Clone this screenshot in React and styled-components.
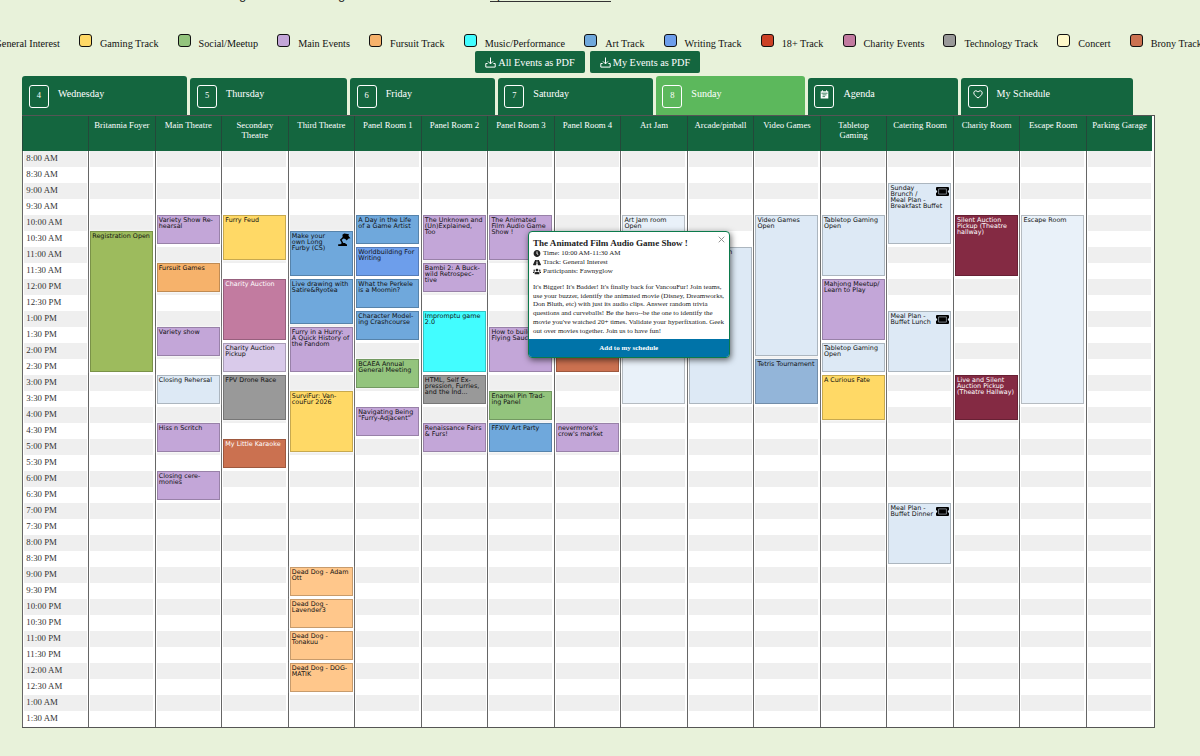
import React from "react";
import styled, {createGlobalStyle, css} from "styled-components";
import {FaClock, FaRoad, FaUsers} from "react-icons/fa";

const tracks = [
    {name: "General Interest", color: "#c3a6d8"},
    {name: "Gaming Track", color: "#ffd966"},
    {name: "Social/Meetup", color: "#93c47d"},
    {name: "Main Events", color: "#c3a6d8"},
    {name: "Fursuit Track", color: "#f6b26b"},
    {name: "Music/Performance", color: "#42fdff"},
    {name: "Art Track", color: "#6fa8dc"},
    {name: "Writing Track", color: "#6d9eeb"},
    {name: "18+ Track", color: "#cc4125"},
    {name: "Charity Events", color: "#c27ba0"},
    {name: "Technology Track", color: "#999999"},
    {name: "Concert", color: "#fff9c9"},
    {name: "Brony Track", color: "#cb7150"},
];

const colors = {
    green: "#9dbb5d",
    social: "#93c47d",
    main: "#c3a6d8",
    lilac: "#d9caea",
    fursuit: "#f6b26b",
    dance: "#ffc78b",
    gaming: "#ffd966",
    charity: "#c27ba0",
    tech: "#999999",
    brony: "#cb7150",
    art: "#6fa8dc",
    writing: "#6d9eeb",
    music: "#42fdff",
    tetris: "#93b5d9",
    open: "#dde9f5",
    pale: "#e9f1f9",
    wine: "#842a43",
};

const days = [
    {label: "Wednesday", icon: "4", width: 165, tall: true},
    {label: "Thursday", icon: "5", width: 156.5},
    {label: "Friday", icon: "6", width: 144.5},
    {label: "Saturday", icon: "7", width: 155},
    {label: "Sunday", icon: "8", width: 149, tall: true, active: true},
    {label: "Agenda", icon: "calendar", width: 150},
    {label: "My Schedule", icon: "heart", width: 172},
];

// start is the half hour slot counted from 8:00 AM, span the number of slots
const rooms = [
    {name: "Britannia Foyer", events: [
        {title: "Registration Open", start: 5, span: 9, color: "green"},
    ]},
    {name: "Main Theatre", events: [
        {title: "Variety Show Re-\nhearsal", start: 4, span: 2, color: "main"},
        {title: "Fursuit Games", start: 7, span: 2, color: "fursuit"},
        {title: "Variety show", start: 11, span: 2, color: "main"},
        {title: "Closing Rehersal", start: 14, span: 2, color: "open"},
        {title: "Hiss n Scritch", start: 17, span: 2, color: "main"},
        {title: "Closing cere-\nmonies", start: 20, span: 2, color: "main"},
    ]},
    {name: "Secondary\nTheatre", events: [
        {title: "Furry Feud", start: 4, span: 3, color: "gaming"},
        {title: "Charity Auction", start: 8, span: 4, color: "charity", light: true},
        {title: "Charity Auction\nPickup", start: 12, span: 2, color: "lilac"},
        {title: "FPV Drone Race", start: 14, span: 3, color: "tech"},
        {title: "My Little Karaoke", start: 18, span: 2, color: "brony", light: true},
    ]},
    {name: "Third Theatre", events: [
        {title: "Make your\nown Long\nFurby (CS)", start: 5, span: 3, color: "art", icon: "lamp"},
        {title: "Live drawing with\nSatire&Ryotea", start: 8, span: 3, color: "art"},
        {title: "Furry in a Hurry:\nA Quick History of\nthe Fandom", start: 11, span: 3, color: "main"},
        {title: "SurviFur: Van-\ncouFur 2026", start: 15, span: 4, color: "gaming"},
        {title: "Dead Dog - Adam\nOtt", start: 26, span: 2, color: "dance"},
        {title: "Dead Dog -\nLavender3", start: 28, span: 2, color: "dance"},
        {title: "Dead Dog -\nTonakuu", start: 30, span: 2, color: "dance"},
        {title: "Dead Dog - DOG-\nMATIK", start: 32, span: 2, color: "dance"},
    ]},
    {name: "Panel Room 1", events: [
        {title: "A Day in the Life\nof a Game Artist", start: 4, span: 2, color: "art"},
        {title: "Worldbuilding For\nWriting", start: 6, span: 2, color: "writing"},
        {title: "What the Perkele\nis a Moomin?", start: 8, span: 2, color: "art"},
        {title: "Character Model-\ning Crashcourse", start: 10, span: 2, color: "art"},
        {title: "BCAEA Annual\nGeneral Meeting", start: 13, span: 2, color: "social"},
        {title: "Navigating Being\n\"Furry-Adjacent\"", start: 16, span: 2, color: "main"},
    ]},
    {name: "Panel Room 2", events: [
        {title: "The Unknown and\n(Un)Explained,\nToo", start: 4, span: 3, color: "main"},
        {title: "Bambi 2: A Buck-\nwild Retrospec-\ntive", start: 7, span: 2, color: "main"},
        {title: "Impromptu game\n2.0", start: 10, span: 4, color: "music"},
        {title: "HTML, Self Ex-\npression, Furries,\nand the Ind...", start: 14, span: 2, color: "tech"},
        {title: "Renaissance Fairs\n& Furs!", start: 17, span: 2, color: "main"},
    ]},
    {name: "Panel Room 3", events: [
        {title: "The Animated\nFilm Audio Game\nShow !", start: 4, span: 3, color: "main"},
        {title: "How to build\nFlying Saucer", start: 11, span: 3, color: "main"},
        {title: "Enamel Pin Trad-\ning Panel", start: 15, span: 2, color: "social"},
        {title: "FFXIV Art Party", start: 17, span: 2, color: "art"},
    ]},
    {name: "Panel Room 4", events: [
        {title: "", start: 12, span: 2, color: "brony", light: true},
        {title: "nevermore's\ncrow's market", start: 17, span: 2, color: "main"},
    ]},
    {name: "Art Jam", events: [
        {title: "Art Jam room\nOpen", start: 4, span: 12, color: "pale"},
    ]},
    {name: "Arcade/pinball", events: [
        {title: "Arcade Open", start: 6, span: 10, color: "open"},
    ]},
    {name: "Video Games", events: [
        {title: "Video Games\nOpen", start: 4, span: 9, color: "open"},
        {title: "Tetris Tournament", start: 13, span: 3, color: "tetris"},
    ]},
    {name: "Tabletop\nGaming", events: [
        {title: "Tabletop Gaming\nOpen", start: 4, span: 4, color: "open"},
        {title: "Mahjong Meetup/\nLearn to Play", start: 8, span: 4, color: "main"},
        {title: "Tabletop Gaming\nOpen", start: 12, span: 2, color: "open"},
        {title: "A Curious Fate", start: 14, span: 3, color: "gaming"},
    ]},
    {name: "Catering Room", events: [
        {title: "Sunday\nBrunch /\nMeal Plan -\nBreakfast Buffet", start: 2, span: 4, color: "open", icon: "ticket"},
        {title: "Meal Plan -\nBuffet Lunch", start: 10, span: 4, color: "open", icon: "ticket"},
        {title: "Meal Plan -\nBuffet Dinner", start: 22, span: 4, color: "open", icon: "ticket"},
    ]},
    {name: "Charity Room", events: [
        {title: "Silent Auction\nPickup (Theatre\nhallway)", start: 4, span: 4, color: "wine", light: true},
        {title: "Live and Silent\nAuction Pickup\n(Theatre Hallway)", start: 14, span: 3, color: "wine", light: true},
    ]},
    {name: "Escape Room", events: [
        {title: "Escape Room", start: 4, span: 12, color: "pale"},
    ]},
    {name: "Parking Garage", events: []},
];

const times = Array.from({length: 36}, (_, i) => {
    const hour = (8 + Math.floor(i / 2)) % 24;
    return `${hour % 12 || 12}:${i % 2 ? "30" : "00"} ${hour < 12 ? "AM" : "PM"}`;
});

const DownloadIcon = () => (
    <svg width="11" height="11" viewBox="0 0 11 11" fill="none" stroke="#fff" strokeWidth="1">
        <path d="M5.5 .5v6.3M3 4.4l2.5 2.5L8 4.4M2.6 6.5H.8v3.6h9.4V6.5H8.4" />
    </svg>
);

const CalendarIcon = () => (
    <svg width="9" height="9" viewBox="0 0 9 9">
        <path fill="#fff" d="M.7 1.2h1.2V.2h1v1h3.2v-1h1v1h1.2v7.4H.7z" />
        <path stroke="#14663f" strokeWidth=".8" d="M1.4 3.2h6.2M2.5 4.9h4M2.5 6.6h2.6" />
    </svg>
);

const HeartIcon = () => (
    <svg width="10" height="9" viewBox="0 0 10 9" fill="none" stroke="#fff" strokeWidth="1">
        <path d="M5 8C3 6.4.8 4.9.8 2.9.8 1.7 1.7.8 2.8.8 3.8.8 4.5 1.3 5 2.1 5.5 1.3 6.2.8 7.2.8c1.1 0 2 .9 2 2.1C9.2 4.9 7 6.4 5 8z" />
    </svg>
);

const TicketIcon = () => (
    <svg width="13" height="9" viewBox="0 0 13 9">
        <path d="M1 0h11a1 1 0 0 1 1 1v2.3a1.2 1.2 0 0 0 0 2.4V8a1 1 0 0 1-1 1H1a1 1 0 0 1-1-1V5.7a1.2 1.2 0 0 0 0-2.4V1a1 1 0 0 1 1-1z" />
        <path fill="none" stroke="#a9b2bb" strokeWidth=".7" d="M2.6 1.9h7.8v5.2H2.6z" />
    </svg>
);

const LampIcon = () => (
    <svg width="14" height="14" viewBox="0 0 14 14">
        <path d="M5.4 1.8 7.2.6 12 1.2 11.4 2.8 13.4 5.2 11.6 5.4 9.6 7.6 8.6 6.2 5.8 5z" />
        <path fill="none" stroke="#000" strokeWidth="1.4" d="M6.6 4.4 3.8 6.8 6.4 11.6" />
        <path d="M1.2 11.2h2.2L5 10h3l1.2 1.2h.8V13H1.2z" />
    </svg>
);

const tabIcons = {calendar: <CalendarIcon />, heart: <HeartIcon />};
const eventIcons = {ticket: <TicketIcon />, lamp: <LampIcon />};

const EventPopup = () => (
    <Popup>
        <Close>
            <svg width="7" height="7" viewBox="0 0 7 7" stroke="#888" strokeWidth=".9">
                <path d="M.7.7l5.6 5.6M6.3.7L.7 6.3" />
            </svg>
        </Close>
        <PopupBody>
            <PopupTitle>The Animated Film Audio Game Show !</PopupTitle>
            <Meta><FaClock />Time: 10:00 AM-11:30 AM</Meta>
            <Meta><FaRoad />Track: General Interest</Meta>
            <Meta><FaUsers />Participants: Fawnyglow</Meta>
            <Description>
                {"It's Bigger! It's Badder! It's finally back for VancouFur! Join teams,\nuse your buzzer, identify the animated movie (Disney, Dreamworks,\nDon Bluth, etc) with just its audio clips. Answer random trivia\nquestions and curveballs! Be the hero--be the one to identify the\nmovie you've watched 20+ times. Validate your hyperfixation. Geek\nout over movies together. Join us to have fun!"}
            </Description>
        </PopupBody>
        <AddButton>Add to my schedule</AddButton>
    </Popup>
);

export default function App() {
    return (
        <Page>
            <GlobalStyle />
            <Intro>
                <span>g</span>
                <span>g</span>
                <IntroLink><b>p</b></IntroLink>
            </Intro>
            <Legend>
                {tracks.map((track) => (
                    <LegendItem key={track.name}>
                        <Swatch $color={track.color} />
                        <span>{track.name}</span>
                    </LegendItem>
                ))}
            </Legend>
            <Exports>
                <ExportButton><DownloadIcon />All Events as PDF</ExportButton>
                <ExportButton><DownloadIcon />My Events as PDF</ExportButton>
            </Exports>
            <Tabs>
                {days.map((day) => (
                    <Tab key={day.label} $width={day.width} $tall={day.tall} $active={day.active}>
                        <TabIcon>{tabIcons[day.icon] || day.icon}</TabIcon>
                        <TabLabel>{day.label}</TabLabel>
                    </Tab>
                ))}
            </Tabs>
            <Schedule>
                <Column>
                    <RoomName />
                    <Slots>
                        {times.map((time) => <Time key={time}>{time}</Time>)}
                    </Slots>
                </Column>
                {rooms.map((room) => (
                    <Column key={room.name}>
                        <RoomName>{room.name}</RoomName>
                        <Slots>
                            {room.events.map((event) => (
                                <Event
                                    key={event.start}
                                    $start={event.start + 1}
                                    $span={event.span}
                                    $color={colors[event.color]}
                                    $light={event.light}
                                >
                                    {event.title}
                                    {event.icon && <EventIcon $kind={event.icon}>{eventIcons[event.icon]}</EventIcon>}
                                </Event>
                            ))}
                        </Slots>
                    </Column>
                ))}
            </Schedule>
            <EventPopup />
        </Page>
    );
}

const GlobalStyle = createGlobalStyle`
  * {
    box-sizing: border-box;
  }
  body {
    margin: 0;
    background: #e8f2da;
    font-family: "Liberation Serif", serif;
    overflow: hidden;
  }
`

const Page = styled.div`
  position: relative;
  width: 1200px;
  height: 756px;
  overflow: hidden;
  background: #e8f2da;
  color: #222;
`

const Intro = styled.div`
  display: flex;
  height: 4px;
  padding-left: 239px;
  font: 13px/14px "Liberation Sans", sans-serif;
  overflow: hidden;

  span {
    flex: none;
    width: 99px;
    margin-top: -12px;
  }
`

const IntroLink = styled.div`
  width: 121px;
  height: 13px;
  margin: -11px 0 0 53px;
  padding-left: 7px;
  border-bottom: 1px solid #333;

  b {
    display: block;
    margin-top: -1px;
    font-weight: normal;
  }
`

const Legend = styled.div`
  display: flex;
  height: 47px;
  padding-top: 30px;
  margin-left: -26.5px;
  color: #111;
  font-size: 10.2px;
  white-space: nowrap;
`

const LegendItem = styled.div`
  display: flex;
  flex: none;
  gap: 8px;
  margin-right: 19.1px;
  line-height: 19px;
`

const Swatch = styled.i`
  width: 13px;
  height: 13px;
  border: 1.5px solid #111;
  border-radius: 3px;
  background: ${({$color}) => $color};
`

const Exports = styled.div`
  display: flex;
  justify-content: center;
  gap: 5px;
  height: 24.5px;
  padding-right: 25px;
`

const ExportButton = styled.button`
  display: flex;
  align-items: center;
  justify-content: center;
  gap: 2px;
  width: 110px;
  height: 22px;
  padding: 0;
  border: 0;
  border-radius: 2px;
  background: #14663f;
  color: #fff;
  font: 10.3px "Liberation Serif", serif;
  white-space: nowrap;
`

const Tabs = styled.div`
  display: flex;
  align-items: flex-end;
  gap: 3.1px;
  height: 39.5px;
  padding-left: 22.4px;
`

const Tab = styled.div`
  display: flex;
  flex: none;
  gap: 9px;
  width: ${({$width}) => $width}px;
  height: ${({$tall}) => $tall ? "39.5px" : "37px"};
  padding: ${({$tall}) => $tall ? "9.5px" : "7px"} 0 0 6.6px;
  border-radius: 3px 3px 0 0;
  background: ${({$active}) => $active ? "#5cb85c" : "#14663f"};
  color: #fff;
`

const TabIcon = styled.div`
  display: flex;
  justify-content: center;
  align-items: center;
  width: 20px;
  height: 23px;
  padding-bottom: 4px;
  border: 1px solid #fff;
  border-radius: 3px;
  font-size: 8.5px;
`

const TabLabel = styled.div`
  font-size: 10.1px;
  line-height: 17px;
`

const Schedule = styled.div`
  display: flex;
  width: 1133px;
  height: 613px;
  margin-left: 22px;
  border: solid #555;
  border-width: 1px 1px 1px 0;
  background: #fff;
`

const Column = styled.div`
  flex: none;
  width: 66.53px;
  border-left: 1px solid #666;

  &:first-child {
    width: 66.1px;
  }
`

const RoomName = styled.div`
  height: 35px;
  padding-top: 5px;
  margin-left: -1px;
  border-left: 1px solid #24483a;
  background: #14663f;
  color: #fff;
  font-size: 8.75px;
  line-height: 9.7px;
  text-align: center;
  white-space: pre;
`

const Slots = styled.div`
  display: grid;
  grid-template-rows: repeat(36, 16px);
  padding: 0 1.5px 0 1px;
  background: repeating-linear-gradient(#efefef 0 16px, #fff 16px 32px) content-box;
`

const Time = styled.div`
  padding-left: 2.3px;
  color: #333;
  font-size: 8.8px;
  line-height: 15px;
`

const Event = styled.div`
  position: relative;
  grid-row: ${({$start, $span}) => `${$start} / span ${$span}`};
  margin: 0 0 3px;
  padding: 2.2px 0 0 1.2px;
  border: 1px solid rgba(0, 0, 0, .22);
  box-shadow: 0 0 1px 1px rgba(255, 255, 255, .45);
  background: ${({$color}) => $color};
  color: ${({$light}) => $light ? "#fff" : "#111"};
  font: 6.4px/5.8px "DejaVu Sans", sans-serif;
  white-space: pre;
`

const EventIcon = styled.div`
  position: absolute;
  right: 1.5px;
  top: 2.5px;
  line-height: 0;

  ${({$kind}) => $kind === "lamp" && css`
    right: .5px;
    top: 1px;
  `}
`

const Popup = styled.div`
  position: absolute;
  left: 528px;
  top: 231px;
  display: flex;
  flex-direction: column;
  width: 201.5px;
  height: 127px;
  border: 1.5px solid #0b7a4b;
  border-radius: 4px;
  background: #fff;
  box-shadow: 1px 2px 6px rgba(0, 0, 0, .6);
  overflow: hidden;
`

const PopupBody = styled.div`
  flex: 1;
  padding: 5px 4px 0;
`

const PopupTitle = styled.div`
  font-size: 9.05px;
  font-weight: bold;
  line-height: 12px;
`

const Meta = styled.div`
  display: flex;
  align-items: center;
  gap: 2px;
  height: 8.9px;
  font-size: 7px;

  svg {
    width: 8px;
    height: 7px;
  }
`

const Description = styled.div`
  margin-top: 7.4px;
  font-size: 7px;
  line-height: 8.7px;
  white-space: pre;
`

const Close = styled.div`
  position: absolute;
  right: 4px;
  top: 4px;
  line-height: 0;
`

const AddButton = styled.div`
  height: 18.5px;
  background: #0073a8;
  color: #fff;
  font-size: 7px;
  font-weight: bold;
  line-height: 18px;
  text-align: center;
`
